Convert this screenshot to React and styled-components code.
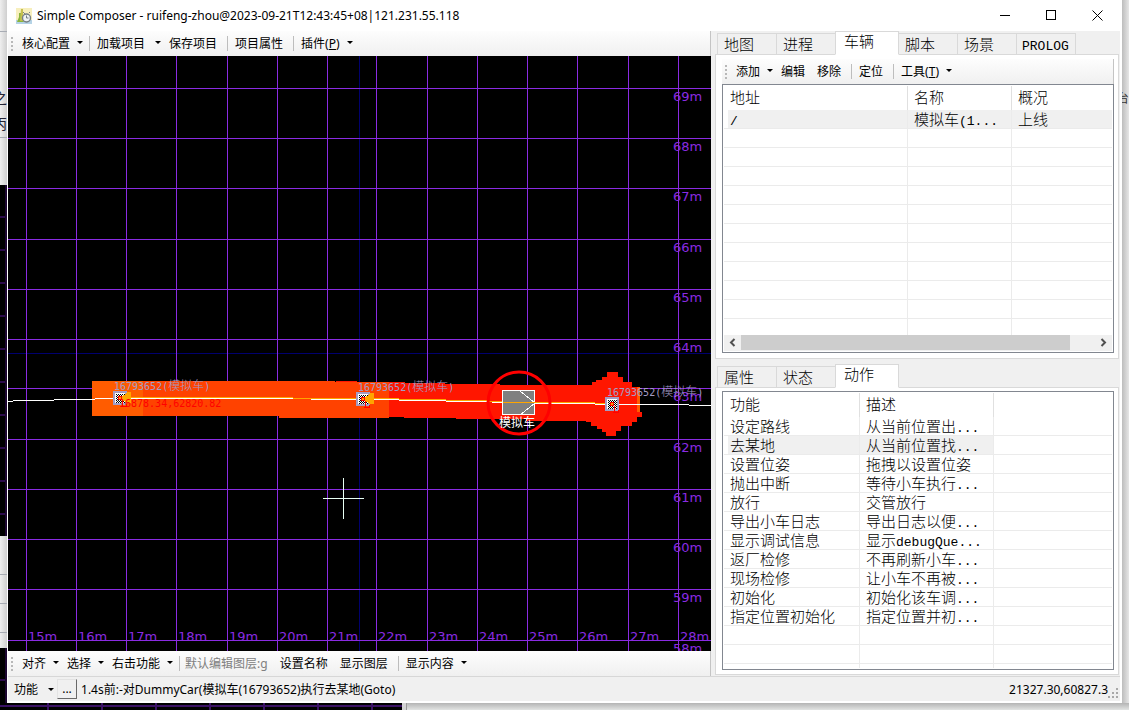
import React, { useState } from "react"
import styled, { createGlobalStyle } from "styled-components"

const GlobalStyle = createGlobalStyle`
	* {
		box-sizing: border-box;
	}
	body {
		margin: 0;
		overflow: hidden;
		font-family: "Noto Sans", "Noto Sans CJK SC", sans-serif;
		font-size: 12px;
		color: #000;
	}
	button {
		border: none;
		background: none;
		padding: 0;
		font: inherit;
		color: inherit;
		white-space: nowrap;
	}
`
const Desktop = styled.div`
	display: grid;
	grid-template-columns: 7px minmax(0, 1fr) 7px;
	grid-template-rows: minmax(0, 1fr) 7px;
	height: 100vh;
	background: #e4e4e4;
`
const Strip = styled.div`
	display: flex;
	flex-direction: column;
	overflow: hidden;
	background: #000;
`
const Sheet = styled.div`
	flex: none;
	display: flex;
	flex-direction: column;
	height: ${p => p.$height}px;
	padding-top: ${p => p.$top}px;
	overflow: hidden;
	color: #223;
	font-size: 14px;
	line-height: 26px;
	direction: rtl;
	white-space: nowrap;
	background: linear-gradient(to right, #efefef, #cfcfcf);
	hr {
		width: 100%;
		margin: 0 0 ${p => p.$gap}px;
		border: none;
		border-top: 1px solid #a8acb4;
	}
`
const DarkGrid = styled.div`
	flex: ${p => (p.$grow ? 1 : "none")};
	height: ${p => (p.$grow ? "auto" : "55px")};
	background: repeating-linear-gradient(to bottom, #000 0 31px, #2c0a4c 31px 33px);
	border-right: 2px solid #1c0630;
`
const Right = styled.div`
	padding-top: 86px;
	overflow: hidden;
	color: #333;
	line-height: 26px;
	direction: rtl;
	background: linear-gradient(to right, #bdbdbd, #e6e6e6);
`
const Bottom = styled.div`
	grid-column: 1 / -1;
	display: flex;
	background: linear-gradient(to bottom, #b4b4b4, #e2e4e3);
`
const BottomDark = styled.div`
	width: 36%;
	border-right: 4px solid #d4d4d4;
	box-shadow: 1px 0 #999;
	background: linear-gradient(to bottom, transparent 2px, #3a1164 2px 4px, transparent 4px),
		repeating-linear-gradient(to right, #000 0 47px, #3a1164 47px 49px, #000 49px 54px);
`
const Window = styled.main`
	display: flex;
	flex-direction: column;
	min-width: 0;
	padding: 0 2px 2px 1px;
	background: #fff;
`
const TitleBar = styled.header`
	display: flex;
	align-items: center;
	flex: none;
	height: 31px;
	padding-left: 8px;
	gap: 5px;
	h1 {
		flex: 1;
		margin: 0;
		font-size: 12px;
		font-weight: 400;
		white-space: nowrap;
	}
`
const WindowButtons = styled.div`
	display: flex;
	button {
		width: 46px;
		height: 31px;
		display: flex;
		align-items: center;
		justify-content: center;
	}
`
const Body = styled.div`
	flex: 1;
	display: flex;
	min-height: 0;
	background: #f0f0f0;
`
const MapPane = styled.section`
	flex: 1;
	display: flex;
	flex-direction: column;
	min-width: 0;
`
const MapBox = styled.div`
	flex: 1;
	min-height: 0;
	overflow: hidden;
	background: #000;
	svg {
		display: block;
		width: 100%;
		height: 100%;
	}
`
const Bar = styled.div`
	display: flex;
	align-items: center;
	flex: none;
	height: 25px;
	padding-left: 3px;
	overflow: hidden;
	border-right: 1px solid #c4c4c4;
	background: linear-gradient(to bottom, #fdfdfd, #f0f0f0);
`
const Grip = styled.span`
	flex: none;
	width: 2px;
	height: 14px;
	margin-right: 5px;
	background: repeating-linear-gradient(to bottom, #b8b8b8 0 2px, transparent 2px 4px);
`
const Item = styled.button`
	display: flex;
	align-items: center;
	flex: none;
	height: 22px;
	gap: ${p => (p.$split ? 10 : 7)}px;
	padding: 0 ${p => (p.$drop ? 4 : 8)}px 2px 4px;
	&:disabled {
		padding-left: 2px;
		color: #808080;
	}
`
const Arrow = styled.span`
	width: 0;
	border: 3px solid transparent;
	border-top-color: #000;
	border-bottom: none;
`
const Sep = styled.span`
	flex: none;
	width: 1px;
	height: 15px;
	margin: 0 3px 0 2px;
	background: #bdbdbd;
`
const SidePane = styled.aside`
	flex: none;
	width: 409px;
	display: grid;
	grid-template-rows: minmax(0, 328fr) minmax(0, 311fr);
	gap: 5px;
	padding: 0 1px 1px 4px;
	font-family: "Noto Sans CJK SC", sans-serif;
	font-weight: 300;
`
const TabPanel = styled.section`
	display: flex;
	flex-direction: column;
	min-height: 0;
`
const Tabs = styled.div`
	display: flex;
	align-items: flex-end;
	flex: none;
	height: 23px;
	padding-left: 3px;
`
const Tab = styled.button`
	width: ${p => (p.$active ? 64 : 60)}px;
	height: ${p => (p.$active ? 24 : 22)}px;
	margin: 0 0 -1px -1px;
	padding: 0 0 ${p => (p.$active ? 4 : 0)}px ${p => (p.$wide ? 5 : p.$active ? 8 : 6)}px;
	text-align: left;
	font-size: 15px;
	line-height: 18px;
	border: 1px solid #d9d9d9;
	border-bottom-color: ${p => (p.$active ? "#fff" : "#d9d9d9")};
	background: ${p => (p.$active ? "#fff" : "#f0f0f0")};
	position: relative;
	z-index: ${p => (p.$active ? 1 : 0)};
`
const Page = styled.div`
	flex: 1;
	display: flex;
	flex-direction: column;
	min-height: 0;
	padding: ${p => (p.$bar ? 4 : 3)}px 4px ${p => (p.$bar ? 5 : 4)}px 6px;
	border: 1px solid #d9d9d9;
	background: #fff;
`
const ToolFont = styled.div`
	font-family: "Noto Sans", "Noto Sans CJK SC", sans-serif;
	font-weight: 400;
`
const ListBox = styled.div`
	flex: 1;
	display: flex;
	flex-direction: column;
	min-height: 0;
	padding: 1px;
	border: 1px solid #828790;
`
const Rows = styled.div`
	flex: 1;
	min-height: 0;
	overflow: hidden;
`
const Table = styled.table`
	width: 100%;
	table-layout: fixed;
	border-collapse: separate;
	border-spacing: 0;
	font-size: 15px;
	line-height: 18px;
	th,
	td {
		padding: 0 0 0 6px;
		text-align: left;
		font-weight: inherit;
		white-space: nowrap;
		overflow: hidden;
		border-right: 1px solid #ebebeb;
	}
	th {
		height: 24px;
		padding-bottom: 2px;
		border-color: #e0e0e0;
	}
	td {
		height: 19px;
		border-bottom: 1px solid #ebebeb;
	}
	th:last-child,
	td:last-child {
		border-right: none;
	}
	tr.selected td.text {
		background: #f0f0f0;
	}
	tr.selected td.text:first-child {
		background: linear-gradient(to right, #fff 4px, #f0f0f0 4px);
	}
`
const Latin = styled.span`
	font-family: "Liberation Mono", monospace;
	font-size: 13px;
	line-height: 1;
`
const ScrollBar = styled.div`
	display: flex;
	flex: none;
	height: 16px;
	padding-bottom: 1px;
	background: #f0f0f0;
	button {
		width: 17px;
		display: flex;
		align-items: center;
		justify-content: center;
	}
`
const Track = styled.div`
	flex: 1;
`
const Thumb = styled.div`
	width: 93%;
	height: 100%;
	background: #cdcdcd;
`
const StatusBar = styled.footer`
	display: flex;
	align-items: center;
	flex: none;
	height: 25px;
	padding-left: 6px;
	border-top: 1px solid #d7d7d7;
	background: #f0f0f0;
	white-space: nowrap;
`
const StatusMenu = styled.button`
	display: flex;
	align-items: center;
	gap: 10px;
	margin-right: 3px;
`
const MoreButton = styled.button`
	width: 20px;
	height: 20px;
	margin-right: 4px;
	line-height: 16px;
	border: 1px solid #e3e3e3;
	border-right-color: #696969;
	border-bottom-color: #696969;
`
const Message = styled.span`
	flex: 1;
	overflow: hidden;
`
const SizeGrip = styled.svg`
	align-self: flex-end;
	margin: 0 1px 2px 0;
`

const mainMenu = [
	{ text: "核心配置", drop: true },
	"sep",
	{ text: "加载项目", drop: true, split: true },
	{ text: "保存项目" },
	"sep",
	{ text: "项目属性" },
	"sep",
	{ text: "插件", hotkey: "P", drop: true },
]
const editMenu = [
	{ text: "对齐", drop: true },
	{ text: "选择", drop: true },
	{ text: "右击功能", drop: true },
	"sep",
	{ text: "默认编辑图层:g", disabled: true },
	{ text: "设置名称" },
	{ text: "显示图层" },
	"sep",
	{ text: "显示内容", drop: true },
]
const carMenu = [
	{ text: "添加", drop: true },
	{ text: "编辑" },
	{ text: "移除" },
	"sep",
	{ text: "定位" },
	"sep",
	{ text: "工具", hotkey: "T", drop: true },
]
const actions = [
	["设定路线", "从当前位置出..."],
	["去某地", "从当前位置找..."],
	["设置位姿", "拖拽以设置位姿"],
	["抛出中断", "等待小车执行..."],
	["放行", "交管放行"],
	["导出小车日志", "导出日志以便..."],
	["显示调试信息", "显示debugQue..."],
	["返厂检修", "不再刷新小车..."],
	["现场检修", "让小车不再被..."],
	["初始化", "初始化该车调..."],
	["指定位置初始化", "指定位置并初..."],
]

const columns = [18, 68, 118, 168, 219, 269, 319, 368, 419, 469, 519, 569, 620, 670]
const lines = [32, 82, 132, 183, 233, 283, 332, 383, 433, 483, 533, 584]

const PURPLE = "#8a2be2"
const MONO = '"DejaVu Sans Mono", monospace'

// half-width characters use the mono face, the rest stays in the CJK one
function Mixed({ text }) {
	return text
		.split(/([\x21-\x7e]+)/)
		.map((part, id) => (/^[\x21-\x7e]/.test(part) ? <Latin key={id}>{part}</Latin> : part))
}

function Toolbar({ items, label }) {
	return (
		<Bar role='toolbar' aria-label={label}>
			<Grip />
			{items.map((item, id) =>
				item === "sep" ? (
					<Sep key={id} />
				) : (
					<Item key={id} $drop={item.drop} $split={item.split} disabled={item.disabled}>
						<span>
							{item.text}
							{item.hotkey && (
								<>
									(<u>{item.hotkey}</u>)
								</>
							)}
						</span>
						{item.drop && <Arrow />}
					</Item>
				)
			)}
		</Bar>
	)
}

function TabStrip({ names, active }) {
	return (
		<Tabs role='tablist'>
			{names.map(name => (
				<Tab
					key={name}
					role='tab'
					aria-selected={name === active}
					$active={name === active}
					$wide={name === "PROLOG"}
				>
					<Mixed text={name} />
				</Tab>
			))}
		</Tabs>
	)
}

function List({ head, widths, rows, empty, initial }) {
	const [selected, setSelected] = useState(initial)
	return (
		<Rows>
			<Table>
				<colgroup>
					{widths.map((w, id) => (
						<col key={id} style={w ? { width: w } : undefined} />
					))}
				</colgroup>
				<thead>
					<tr>
						{head.map((h, id) => (
							<th key={id}>{h}</th>
						))}
					</tr>
				</thead>
				<tbody>
					{rows.map((row, id) => (
						<tr
							key={id}
							className={id === selected ? "selected" : null}
							onClick={() => setSelected(id)}
						>
							{head.map((h, c) => (
								<td key={c} className={row[c] ? "text" : null}>
									{row[c] && <Mixed text={row[c]} />}
								</td>
							))}
						</tr>
					))}
					{Array.from({ length: empty }, (_, id) => (
						<tr key={"e" + id}>
							{head.map((h, c) => (
								<td key={c} />
							))}
						</tr>
					))}
				</tbody>
			</Table>
		</Rows>
	)
}

function SiteLabel({ x, y }) {
	return (
		<text
			x={x}
			y={y}
			fill='#a49cc4'
			fontSize='12'
			fontWeight='300'
			fontFamily='"Noto Sans CJK SC", sans-serif'
		>
			<tspan fontFamily={MONO} fontSize='10'>
				16793652(
			</tspan>
			模拟车
			<tspan fontFamily={MONO} fontSize='10'>
				)
			</tspan>
		</text>
	)
}

function Site({ x, y, arrow }) {
	return (
		<g transform={`translate(${x} ${y})`}>
			<rect width='14' height='14' fill='#a49cc4' />
			<rect x='2' y='2' width='10' height='10' fill='#fff' />
			<rect x='3' y='3' width='9' height='9' fill='url(#checker)' />
			{arrow && <path d='M7 7L14 2v-1h4v11h-4z' fill='#ffa500' />}
			<rect x='5.5' y='5.5' width='3' height='3' fill='#ffa500' stroke='#f00' />
			<path d='M9.5 9v6M8 15.5h6M13.5 13v2' fill='none' stroke='#f00' />
		</g>
	)
}

function SiteMap() {
	return (
		<svg shapeRendering='crispEdges' role='img' aria-label='地图'>
			<defs>
				<pattern id='checker' width='2' height='2' patternUnits='userSpaceOnUse'>
					<path d='M0 0h1v1h-1zM1 1h1v1h-1z' fill='#000' />
				</pattern>
			</defs>
			<path d='M351.5 0V2000M0 297.5H4000' stroke='#00006e' />
			<g fill={PURPLE} fontFamily='"DejaVu Sans", sans-serif' fontSize='13'>
				{columns.map((x, id) => (
					<text key={x} x={x + 2} y='585'>
						{15 + id}m
					</text>
				))}
			</g>
			<g stroke={PURPLE}>
				{columns.map(x => (
					<path key={x} d={`M${x + 0.5} 0V2000`} />
				))}
				{lines.map(y => (
					<path key={y} d={`M0 ${y + 0.5}H4000`} />
				))}
			</g>
			<path d='M84 325h52v35H84z' fill='#ff5c00' />
			<path d='M135 325h192v1h54v36H271v-2H135z' fill='#ff4200' />
			<path
				d='M328 325h21v1h48v1h40v1h55v1h92v-3h4v-2h6v-3h5v-5h11v5h5v5h9v5h5v25h5v5h-5v5h-5v4h-11v5h-5v5h-10v-4h-4v-3h-5v-3h-6v-4h-5v-1H518v-2h-70v-1h-52v-1h-15V326h-53z'
				fill='#ff1600'
			/>
			<path d='M629 331h3v25h-3z' fill='#ff5c00' />
			<g fill={PURPLE} fontFamily='"DejaVu Sans", sans-serif' fontSize='13'>
				{lines.map((y, id) => (
					<text key={y} x='665' y={y + 13}>
						{69 - id}m
					</text>
				))}
			</g>
			<path
				d='M0 345.5h5M5 344.5h41M46 343.5h41M87 342.5h198M303 343.5h88M391 344.5h47M438 345.5h46M484 346.5h12M526 347.5h61M587 348.5h94M681 349.5H4000'
				stroke='#fff'
			/>
			<path
				d='M120 341.5h165M285 342.5h106M391 343.5h47M438 344.5h42M480 345.5h16M526 346.5h61M587 347.5h17'
				stroke='#ffa500'
			/>
			<Site x={105} y={335} arrow />
			<Site x={348} y={336} arrow />
			<Site x={597} y={341} />
			<text x='111' y='351' fill='#f00' fontFamily={MONO} fontSize='10'>
				16878.34,62820.82
			</text>
			<SiteLabel x={106} y={334} />
			<SiteLabel x={350} y={335} />
			<SiteLabel x={599} y={340} />
			<rect x='494.5' y='334.5' width='32' height='24' fill='#808080' stroke='#fff' />
			<path d='M512 335l15 12l-15 12' fill='none' stroke='#fff' />
			<path d='M495 346.5h32' stroke='#ffa500' />
			<circle
				cx='511'
				cy='347'
				r='31'
				fill='none'
				stroke='#f00'
				strokeWidth='3'
				shapeRendering='auto'
			/>
			<text x='491' y='371' fill='#fff' fontSize='12' fontFamily='"Noto Sans CJK SC", sans-serif'>
				模拟车
			</text>
			<path d='M315 442.5h41M335.5 422v41' stroke='#e8fff4' />
		</svg>
	)
}

function AppIcon() {
	return (
		<svg width='16' height='16' aria-hidden='true'>
			<rect width='16' height='16' fill='#f7efbd' />
			<path d='M0 12h16v4H0z' fill='#b5d3e6' />
			<path d='M3 5h2v4l3 5H1l2-5z' fill='#8ab53c' />
			<path d='M5 1h2v6l2 6H4z' fill='#c6c04e' />
			<circle cx='10.5' cy='10' r='4' fill='#eef2f4' stroke='#777f85' strokeWidth='1.4' />
			<path d='M10.5 7.5V10h2M7 4l2 2M13 5l1-1' fill='none' stroke='#777f85' />
		</svg>
	)
}

function App() {
	return (
		<Desktop>
			<GlobalStyle />
			<Strip aria-hidden='true'>
				<Sheet $height={185} $top={31} $gap={53}>
					<hr />
					<span>之</span>
					<span>丙</span>
					<hr />
				</Sheet>
				<DarkGrid $grow />
				<Sheet $height={112} $top={38} $gap={28}>
					<hr />
					<hr />
					<hr />
				</Sheet>
				<DarkGrid />
			</Strip>
			<Window>
				<TitleBar>
					<AppIcon />
					<h1>Simple Composer - ruifeng-zhou@2023-09-21T12:43:45+08|121.231.55.118</h1>
					<WindowButtons>
						<button aria-label='最小化'>
							<svg width='11' height='11' stroke='#000'>
								<path d='M0 5.5h10' />
							</svg>
						</button>
						<button aria-label='最大化'>
							<svg width='11' height='11' stroke='#000' fill='none'>
								<rect x='0.5' y='0.5' width='9' height='9' />
							</svg>
						</button>
						<button aria-label='关闭'>
							<svg width='11' height='11' stroke='#000'>
								<path d='M0.5 0.5l10 10M10.5 0.5l-10 10' />
							</svg>
						</button>
					</WindowButtons>
				</TitleBar>
				<Body>
					<MapPane>
						<Toolbar items={mainMenu} label='项目' />
						<MapBox>
							<SiteMap />
						</MapBox>
						<Toolbar items={editMenu} label='编辑' />
					</MapPane>
					<SidePane>
						<TabPanel>
							<TabStrip names={["地图", "进程", "车辆", "脚本", "场景", "PROLOG"]} active='车辆' />
							<Page $bar>
								<ToolFont>
									<Toolbar items={carMenu} label='车辆' />
								</ToolFont>
								<ListBox>
									<List
										head={["地址", "名称", "概况"]}
										widths={[184, 104, 0]}
										rows={[["/", "模拟车(1...", "上线"]]}
										empty={12}
										initial={0}
									/>
									<ScrollBar>
										<button aria-label='向左滚动'>
											<svg width='7' height='9' fill='none' stroke='#505050' strokeWidth='2'>
												<path d='M5.5 1L2 4.5L5.5 8' />
											</svg>
										</button>
										<Track>
											<Thumb />
										</Track>
										<button aria-label='向右滚动'>
											<svg width='7' height='9' fill='none' stroke='#505050' strokeWidth='2'>
												<path d='M1.5 1L5 4.5L1.5 8' />
											</svg>
										</button>
									</ScrollBar>
								</ListBox>
							</Page>
						</TabPanel>
						<TabPanel>
							<TabStrip names={["属性", "状态", "动作"]} active='动作' />
							<Page>
								<ListBox>
									<List
										head={["功能", "描述", ""]}
										widths={[136, 134, 0]}
										rows={actions}
										empty={4}
										initial={1}
									/>
								</ListBox>
							</Page>
						</TabPanel>
					</SidePane>
				</Body>
				<StatusBar>
					<StatusMenu>
						功能
						<Arrow />
					</StatusMenu>
					<MoreButton aria-label='更多'>...</MoreButton>
					<Message>1.4s前:-对DummyCar(模拟车(16793652)执行去某地(Goto)</Message>
					<span>21327.30,60827.3</span>
					<SizeGrip width='11' height='11' fill='#a8a8a8'>
						<path d='M8 0h2v2h-2zM4 4h2v2h-2zM8 4h2v2h-2zM0 8h2v2h-2zM4 8h2v2h-2zM8 8h2v2h-2z' />
					</SizeGrip>
				</StatusBar>
			</Window>
			<Right aria-hidden='true'>台</Right>
			<Bottom>
				<BottomDark />
			</Bottom>
		</Desktop>
	)
}

export default App
